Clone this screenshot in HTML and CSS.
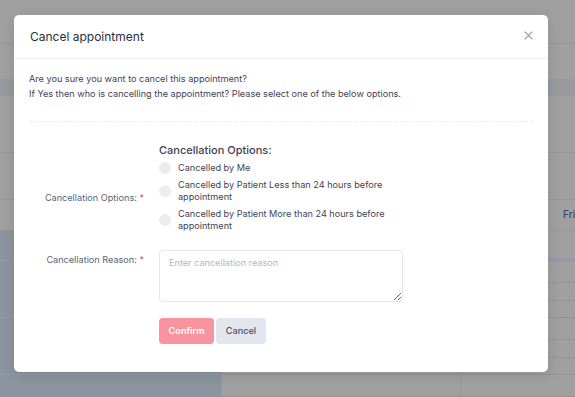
FILE: index.html
```html
<!DOCTYPE html>
<html>
<head>
<meta charset="utf-8">
<link rel="stylesheet" href="styles.css">
</head>
<body>
<div class="page">
  <div class="bg-top">
    <div class="bg-row h43 line"></div>
    <div class="bg-row h36"></div>
    <div class="bg-row band"></div>
    <div class="bg-row h56 line"></div>
    <div class="bg-row h47 line"></div>
    <div class="bg-row h31 line day"><span class="fri">Fri</span></div>
  </div>
  <div class="bg-bottom">
    <div class="col col-blue">
      <div class="cell c-double"></div>
      <div class="cell c-none"></div>
      <div class="cell c-none2"></div>
      <div class="cell c-solid"></div>
      <div class="cell c-none"></div>
      <div class="cell c-none2"></div>
      <div class="cell c-solid"></div>
    </div>
    <div class="col col-mid">
      <div class="cell c-double"></div>
      <div class="cell c-dot"></div>
      <div class="cell c-dot2"></div>
      <div class="cell c-solid"></div>
      <div class="cell c-dot"></div>
      <div class="cell c-dot2"></div>
      <div class="cell c-solid"></div>
      <div class="cell c-dot"></div>
    </div>
    <div class="col col-right">
      <div class="cell c-double"></div>
      <div class="cell c-dot"></div>
      <div class="cell c-dot2"></div>
      <div class="cell c-solid"></div>
      <div class="cell c-dot"></div>
      <div class="cell c-dot2"></div>
      <div class="cell c-solid"></div>
      <div class="cell c-dot"></div>
    </div>
  </div>
</div>

<div class="modal">
  <div class="modal-header">
    <h5 class="modal-title">Cancel appointment</h5>
    <span class="close">
      <svg width="9" height="9" viewBox="0 0 9 9"><path d="M1 1L8 8M8 1L1 8" stroke="#a1a5b7" stroke-width="1.2" stroke-linecap="round"/></svg>
    </span>
  </div>
  <div class="modal-body">
    <p class="intro">Are you sure you want to cancel this appointment?<br>If Yes then who is cancelling the appointment? Please select one of the below options.</p>
    <div class="separator"></div>
    <div class="form">
      <div class="label"></div>
      <div class="heading">Cancellation Options:</div>
      <div class="label label-mid">Cancellation Options: <span class="req">*</span></div>
      <div class="options">
        <label class="option"><span class="radio"></span><span class="opt-text">Cancelled by Me</span></label>
        <label class="option"><span class="radio"></span><span class="opt-text">Cancelled by Patient Less than 24 hours before appointment</span></label>
        <label class="option"><span class="radio"></span><span class="opt-text">Cancelled by Patient More than 24 hours before appointment</span></label>
      </div>
      <div class="label label-top">Cancellation Reason: <span class="req">*</span></div>
      <textarea class="reason" placeholder="Enter cancellation reason"></textarea>
      <div class="label"></div>
      <div class="actions">
        <button class="btn btn-confirm">Confirm</button>
        <button class="btn btn-cancel">Cancel</button>
      </div>
    </div>
  </div>
</div>
</body>
</html>
```

FILE: styles.css
```css
* { box-sizing: border-box; }
html, body { margin: 0; padding: 0; }
body {
  width: 575px;
  height: 397px;
  overflow: hidden;
  background: #a0a0a0;
  font-family: Inter, "Open Sans", sans-serif;
  position: relative;
}
.page { width: 575px; height: 397px; }
.bg-row { width: 100%; }
.line { border-bottom: 1px solid #969696; }
.h43 { height: 44px; }
.h36 { height: 35px; }
.band { height: 17px; background: #999aa0; }
.h56 { height: 57px; }
.h47 { height: 47px; }
.h31 { height: 31px; }
.day { position: relative; }
.fri {
  position: absolute;
  left: 563px;
  top: 8px;
  font-size: 10px;
  font-weight: 500;
  color: #3e4a68;
}
.bg-bottom {
  display: grid;
  grid-template-columns: 221px 240px 1fr;
  height: 167px;
}
.col-blue { background: #8c959f; }
.col-mid { border-right: 1px solid #969696; border-left: 1px solid #969696; }
.cell { width: 100%; }
.c-double { height: 30px; border-bottom: 3px double #8e92a4; }
.c-dot { height: 22px; border-bottom: 1px dotted #8c8c8c; }
.c-dot2 { height: 18px; border-bottom: 1px dotted #8c8c8c; }
.c-solid { height: 17px; border-bottom: 1px solid #939393; }
.c-none { height: 22px; }
.c-none2 { height: 18px; }
.col-blue .c-double { border-bottom: 1px solid #939aa3; }
.col-blue .c-solid { border-bottom: 1px solid #959ca5; }

.modal {
  position: absolute;
  left: 14px;
  top: 15px;
  width: 534px;
  height: 357px;
  background: #fff;
  border-radius: 5px;
  box-shadow: 0 3px 14px rgba(0,0,0,0.12);
}
.modal-header {
  height: 44px;
  display: flex;
  align-items: center;
  justify-content: space-between;
  padding: 0 15px 0 16px;
  border-bottom: 1px solid #eff2f5;
}
.modal-title {
  margin: 0;
  font-size: 12px;
  font-weight: 400;
  color: #2b2d3c;
}
.close { display: flex; width: 9px; height: 9px; margin-top: -2px; }
.modal-body { padding: 12px 15px 0 15px; }
.intro {
  margin: 0;
  font-size: 9.15px;
  line-height: 15px;
  color: #3f4254;
}
.separator {
  margin-top: 20px;
  border-top: 1px dashed #e9ebf1;
}
.form {
  display: grid;
  grid-template-columns: 130px 244px;
  align-items: center;
  margin-top: 21px;
}
.label {
  text-align: right;
  padding-right: 15px;
  font-size: 9.15px;
  color: #5e6278;
  white-space: nowrap;
}
.label-mid { padding-top: 6px; }
.label-top { align-self: start; padding-top: 21px; }
.req { color: #f1416c; }
.heading {
  font-size: 11px;
  font-weight: 500;
  color: #3f4254;
  line-height: 14px;
}
.options { display: flex; flex-direction: column; gap: 4px; padding-top: 5px; }
.option {
  display: flex;
  align-items: center;
  gap: 7px;
}
.radio {
  flex: none;
  width: 12px;
  height: 12px;
  border-radius: 50%;
  background: #ebedf3;
}
.opt-text {
  font-size: 9.15px;
  line-height: 12.5px;
  color: #3f4254;
  width: 222px;
}
.reason {
  margin-top: 17px;
  width: 244px;
  height: 52px;
  border: 1px solid #e4e6ef;
  border-radius: 4px;
  padding: 6px 9px;
  font-family: Inter, "Open Sans", sans-serif;
  font-size: 9.15px;
  color: #3f4254;
  resize: vertical;
}
.reason::placeholder { color: #b5b5c3; }
.actions {
  display: flex;
  gap: 2px;
  margin-top: 16px;
}
.btn {
  height: 26px;
  border: 0;
  border-radius: 4px;
  font-family: Inter, "Open Sans", sans-serif;
  font-size: 9.15px;
  padding: 0;
}
.btn-confirm {
  width: 55px;
  background: #f8949f;
  color: #fff;
  font-weight: 600;
}
.btn-cancel {
  width: 50px;
  background: #e4e6ef;
  color: #4a4d63;
  font-weight: 500;
}
```
